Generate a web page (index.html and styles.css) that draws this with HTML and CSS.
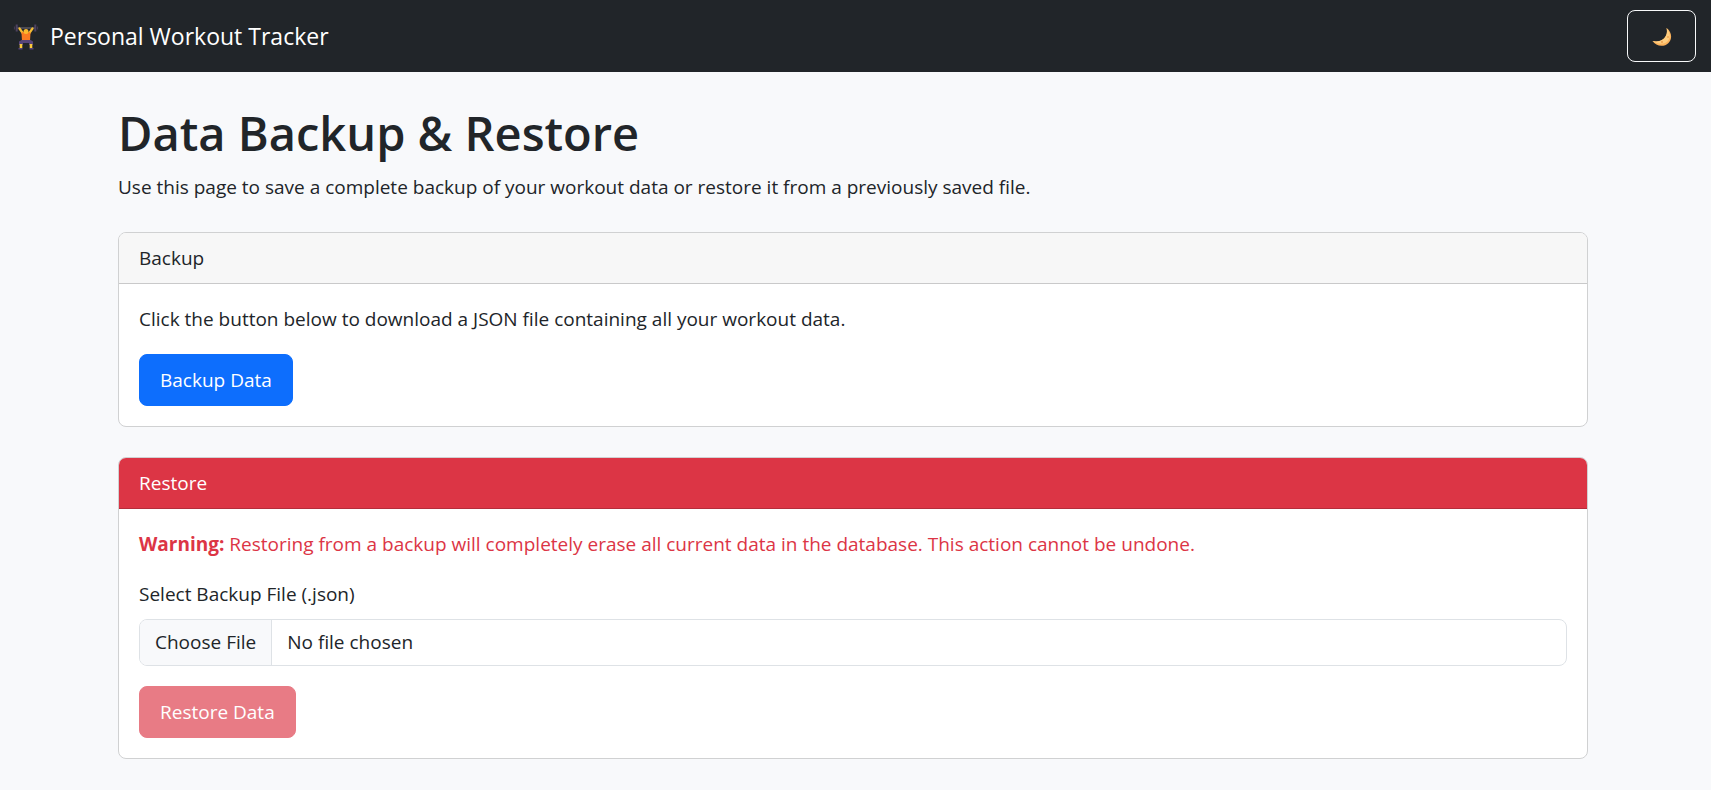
FILE: index.html
```html
<!DOCTYPE html>
<html lang="en">
<head>
<meta charset="utf-8">
<meta name="viewport" content="width=device-width, initial-scale=1">
<title>Personal Workout Tracker</title>
<link rel="stylesheet" href="styles.css">
</head>
<body>
<nav class="navbar">
  <a class="brand" href="#">
    <svg class="brand-icon" viewBox="0 0 26 28" aria-hidden="true">
      <path d="M3 6H23" stroke="#77717f" stroke-width="1"/>
      <path d="M1.500 4.500V7.500M24.500 4.500V7.500" stroke="#41384f" stroke-width="1.200"/>
      <path d="M3.700 2.500V9.500M22.300 2.500V9.500" stroke="#4d4260" stroke-width="2"/>
      <path d="M6.500 6.500L10 11.500M19.500 6.500L16 11.500" stroke="#f3bd35" stroke-width="2.200" stroke-linecap="round"/>
      <path d="M8.500 10.500L11 10H15L17.500 10.500L17 19H9Z" fill="#f97a22"/>
      <circle cx="13" cy="9.500" r="2.500" fill="#fbb92c"/>
      <path d="M8.500 18H17.500L20 19.500V23H16V21H10V23H6V19.500Z" fill="#56457a"/>
      <path d="M8 22V26M18 22V26" stroke="#fbc93c" stroke-width="2.600"/>
      <path d="M5.500 26.800H9.500M16.500 26.800H20.500" stroke="#56457a" stroke-width="1.600"/>
    </svg>
    <span>Personal Workout Tracker</span>
  </a>
  <button class="btn btn-theme" type="button" aria-label="Toggle dark mode">
    <svg class="moon" viewBox="0 0 20 22" aria-hidden="true">
      <path d="M14.500 3C20 7 20.500 14 16.500 18C12 22.500 4 21.500 0.500 16C4 17 9 16.500 12 13.500C15 10.500 15.500 6.500 14.500 3Z" fill="#fbb25b"/>
      <path d="M14.500 3C18.200 7 18.800 12 16.200 15.500C13 19.500 7 20 0.500 16C4 17 9 16.500 12 13.500C15 10.500 15.500 6.500 14.500 3Z" fill="#ffce80"/>
      <circle cx="10" cy="17" r="1" fill="#ee9f4b"/>
      <circle cx="16" cy="12" r="1" fill="#f1a650"/>
    </svg>
  </button>
</nav>

<div class="page">
  <main class="container">
    <h1 class="title">Data Backup &amp; Restore</h1>
    <p class="lead">Use this page to save a complete backup of your workout data or restore it from a previously saved file.</p>

    <section class="card">
      <div class="card-header">Backup</div>
      <div class="card-body">
        <p class="text">Click the button below to download a JSON file containing all your workout data.</p>
        <button class="btn btn-primary" type="button">Backup Data</button>
      </div>
    </section>

    <section class="card">
      <div class="card-header card-header-danger">Restore</div>
      <form class="card-body">
        <p class="text text-danger"><strong>Warning:</strong> Restoring from a backup will completely erase all current data in the database. This action cannot be undone.</p>
        <label class="form-label" for="backup-file">Select Backup File (.json)</label>
        <input class="form-control" id="backup-file" type="file" accept=".json">
        <button class="btn btn-danger" type="submit" disabled>Restore Data</button>
      </form>
    </section>
  </main>
</div>
</body>
</html>
```
FILE: styles.css
```css
*, *::before, *::after { box-sizing: border-box; }

body {
  margin: 0;
  background: #f8f9fb;
  color: #212529;
  font-family: "Segoe UI", "Open Sans", "Noto Sans", sans-serif;
  font-size: 19px;
  line-height: 30px;
}

.navbar {
  display: flex;
  align-items: center;
  justify-content: space-between;
  padding: 10px 15px 10px 13px;
  background: #212529;
}

.brand {
  display: flex;
  align-items: center;
  gap: 11px;
  color: #fff;
  font-size: 23px;
  line-height: 34px;
  text-decoration: none;
}

.brand-icon { width: 26px; height: 28px; }

.moon { width: 20px; height: 22px; }

.page { padding: 30px 5px 0 0; }

.container {
  max-width: 1500px;
  margin: 0 auto;
  padding: 0 15px;
}

.title {
  margin: 0 0 8px;
  font-size: 47px;
  font-weight: 600;
  line-height: 62px;
}

.lead { margin: 0 0 30px; }

.card {
  margin-bottom: 30px;
  overflow: hidden;
  background: #fff;
  border: 1px solid #d0d1d2;
  border-radius: 8px;
}

.card-header {
  padding: 10px 20px;
  background: #f7f7f7;
  border-bottom: 1px solid #c9c9ca;
}

.card-header-danger {
  background: #dc3545;
  border-bottom-color: #b52d3b;
  color: #fff;
}

.card-body {
  display: flex;
  flex-direction: column;
  align-items: flex-start;
  padding: 20px;
}

.text { margin: 0 0 20px; }

.text-danger { color: #dc3545; }

.form-label { margin-bottom: 10px; }

.form-control {
  width: 100%;
  height: 47px;
  margin-bottom: 20px;
  padding: 0;
  overflow: hidden;
  background: #fff;
  border: 1px solid #dee2e6;
  border-radius: 8px;
  color: #212529;
  font: inherit;
  line-height: 45px;
}

.form-control::file-selector-button {
  height: 45px;
  margin: 0 15px 0 0;
  padding: 0 15px;
  background: #f8f9fb;
  border: 0 solid #dee2e6;
  border-right-width: 1px;
  color: #212529;
  font: inherit;
}

.btn {
  padding: 10px 20px;
  border: 1px solid transparent;
  border-radius: 8px;
  color: #fff;
  font: inherit;
  cursor: pointer;
}

.btn-primary { background: #0d6efd; border-color: #0d6efd; }

.btn-danger { background: #dc3545; border-color: #dc3545; }

.btn:disabled { opacity: 0.65; cursor: default; }

.btn-theme {
  display: flex;
  align-items: center;
  justify-content: center;
  min-width: 69px;
  min-height: 52px;
  background: transparent;
  border-color: #f8f9fa;
}
```
